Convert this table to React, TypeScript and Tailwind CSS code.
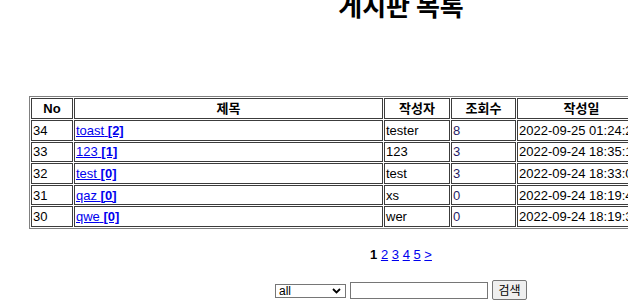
import React from "react";

const rows = [
  { no: 34, title: "toast", cnt: "[2]", writer: "tester", views: "8", date: "2022-09-25 01:24:25" },
  { no: 33, title: "123", cnt: "[1]", writer: "123", views: "3", date: "2022-09-24 18:35:12" },
  { no: 32, title: "test", cnt: "[0]", writer: "test", views: "3", date: "2022-09-24 18:33:05" },
  { no: 31, title: "qaz", cnt: "[0]", writer: "xs", views: "0", date: "2022-09-24 18:19:47" },
  { no: 30, title: "qwe", cnt: "[0]", writer: "wer", views: "0", date: "2022-09-24 18:19:31" },
];

const cell = "border border-[#3c3c3c] p-[1px] whitespace-nowrap";

export default function App() {
  return (
    <div className="w-[628px] h-[308px] overflow-hidden bg-white text-black font-['Liberation_Sans','Noto_Sans_CJK_KR',sans-serif]">
      <div className="w-[802px] flex flex-col">
        <h1 className="-mt-[8px] text-center text-[26px] leading-[26px] font-bold font-['Noto_Sans_CJK_KR',sans-serif]">
          게시판 목록
        </h1>

        <table className="self-start ml-[29px] mt-[78px] border border-[#808080] border-separate border-spacing-[1px] text-[13px] leading-[15px]">
          <thead>
            <tr className="h-[21px]">
              <th className={`${cell} w-[42px] font-bold text-center`}>No</th>
              <th className={`${cell} w-[309px] font-bold text-center`}>제목</th>
              <th className={`${cell} w-[66px] font-bold text-center`}>작성자</th>
              <th className={`${cell} w-[65px] font-bold text-center`}>조회수</th>
              <th className={`${cell} w-[129px] font-bold text-center`}>작성일</th>
            </tr>
          </thead>
          <tbody>
            {rows.map((r) => (
              <tr key={r.no} className="h-[20.6px]">
                <td className={cell}>{r.no}</td>
                <td className={cell}>
                  <a href="#" className="text-[#0000ee] underline">
                    {r.title} <b>{r.cnt}</b>
                  </a>
                </td>
                <td className={cell}>{r.writer}</td>
                <td className={`${cell} text-[#2a1d66]`}>{r.views}</td>
                <td className={cell}>{r.date}</td>
              </tr>
            ))}
          </tbody>
        </table>

        <div className="mt-[18px] h-[15px] text-center text-[13px] leading-[15px]">
          <b>1</b>{" "}
          <a href="#" className="text-[#0000ee] underline">2</a>{" "}
          <a href="#" className="text-[#0000ee] underline">3</a>{" "}
          <a href="#" className="text-[#0000ee] underline">4</a>{" "}
          <a href="#" className="text-[#0000ee] underline">5</a>{" "}
          <a href="#" className="text-[#0000ee] underline">&gt;</a>
        </div>

        <div className="mt-[18px] flex items-center justify-center gap-[4px] h-[20px]">
          <div className="relative w-[71px] h-[14px] mt-[2px]">
            <select className="block appearance-none w-[71px] h-[14px] min-h-0 border border-[#767676] bg-white pl-[3px] py-0 text-[12px] leading-[12px] text-black outline-none">
              <option>all</option>
              <option>제목</option>
              <option>작성자</option>
            </select>
            <svg
              className="pointer-events-none absolute left-[57px] top-[4px]"
              width="9"
              height="6"
              viewBox="0 0 9 6"
            >
              <path d="M1 1 L4.5 4.5 L8 1" fill="none" stroke="#000" strokeWidth="1.8" />
            </svg>
          </div>
          <input
            type="text"
            className="block w-[138px] h-[17px] mt-[1px] border border-[#767676] bg-white outline-none"
          />
          <button className="block w-[35px] h-[20px] bg-[#efefef] border border-[#767676] rounded-[2px] text-[12px] leading-[14px] text-black font-['Noto_Sans_CJK_KR',sans-serif]">
            검색
          </button>
        </div>
      </div>
    </div>
  );
}
